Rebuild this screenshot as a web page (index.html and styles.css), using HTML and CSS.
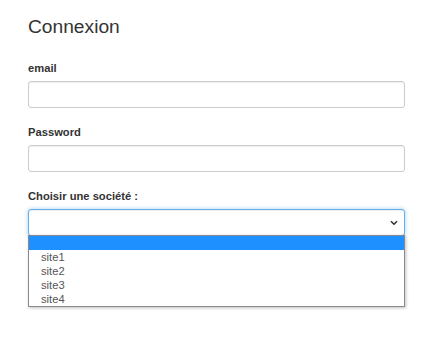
FILE: index.html
```html
<!DOCTYPE html>
<html lang="fr">
<head>
<meta charset="utf-8">
<title>Connexion</title>
<link rel="stylesheet" href="styles.css">
</head>
<body>
<main class="page">
  <h3 class="title">Connexion</h3>
  <form class="form">
    <div class="group">
      <label class="label" for="email">email</label>
      <input class="field" id="email" type="text">
    </div>
    <div class="group">
      <label class="label" for="password">Password</label>
      <input class="field" id="password" type="password">
    </div>
    <div class="group">
      <label class="label">Choisir une société :</label>
      <div class="select-wrap">
        <div class="select is-focus">
          <svg class="chevron" width="8" height="6" viewBox="0 0 8 6"><path d="M1 1.2 L4 4.2 L7 1.2" fill="none" stroke="#333" stroke-width="1.6"/></svg>
        </div>
        <ul class="listbox">
          <li class="option is-active">&nbsp;</li>
          <li class="option">site1</li>
          <li class="option">site2</li>
          <li class="option">site3</li>
          <li class="option">site4</li>
        </ul>
      </div>
    </div>
  </form>
</main>
</body>
</html>
```
FILE: styles.css
```css
* { box-sizing: border-box; }
html, body { margin: 0; padding: 0; background: #fff; }
body {
  min-height: 358px;
  font-family: "Liberation Sans", Arial, sans-serif;
  color: #333;
}
.page {
  width: 377px;
  margin-left: 28px;
  padding-top: 16px;
  padding-bottom: 90px;
}
.title {
  margin: 0 0 22px 0;
  font-size: 19.2px;
  line-height: 22px;
  font-weight: 400;
  color: #333;
}
.form { margin: 0; }
.group { margin-bottom: 16px; }
.label {
  display: block;
  font-size: 11.2px;
  line-height: 16px;
  font-weight: 700;
  margin-bottom: 5px;
  color: #333;
}
.field, .select {
  display: block;
  width: 100%;
  height: 27px;
  margin: 0;
  padding: 0 9px;
  border: 1px solid #ccc;
  border-radius: 3px;
  background: #fff;
  box-shadow: inset 0 1px 1px rgba(0,0,0,.075);
  font: inherit;
  outline: none;
}
.select-wrap { position: relative; }
.select {
  display: flex;
  align-items: center;
  justify-content: flex-end;
  padding-right: 6px;
}
.select.is-focus {
  border-color: #66afe9;
  box-shadow: inset 0 1px 1px rgba(0,0,0,.075), 0 0 4px rgba(102,175,233,.6);
}
.chevron { display: block; margin-top: 1px; }
.listbox {
  position: absolute;
  z-index: 5;
  left: 0;
  right: 0;
  top: 26px;
  height: 72px;
  margin: 0;
  padding: 0;
  list-style: none;
  background: #fff;
  border: 1px solid #8a8a8a;
  box-shadow: 1px 1px 3px rgba(0,0,0,.25);
}
.option {
  display: block;
  height: 14px;
  line-height: 14px;
  font-size: 11.2px;
  padding-left: 12px;
  color: #555;
}
.option.is-active { background: #1e90ff; }
```
